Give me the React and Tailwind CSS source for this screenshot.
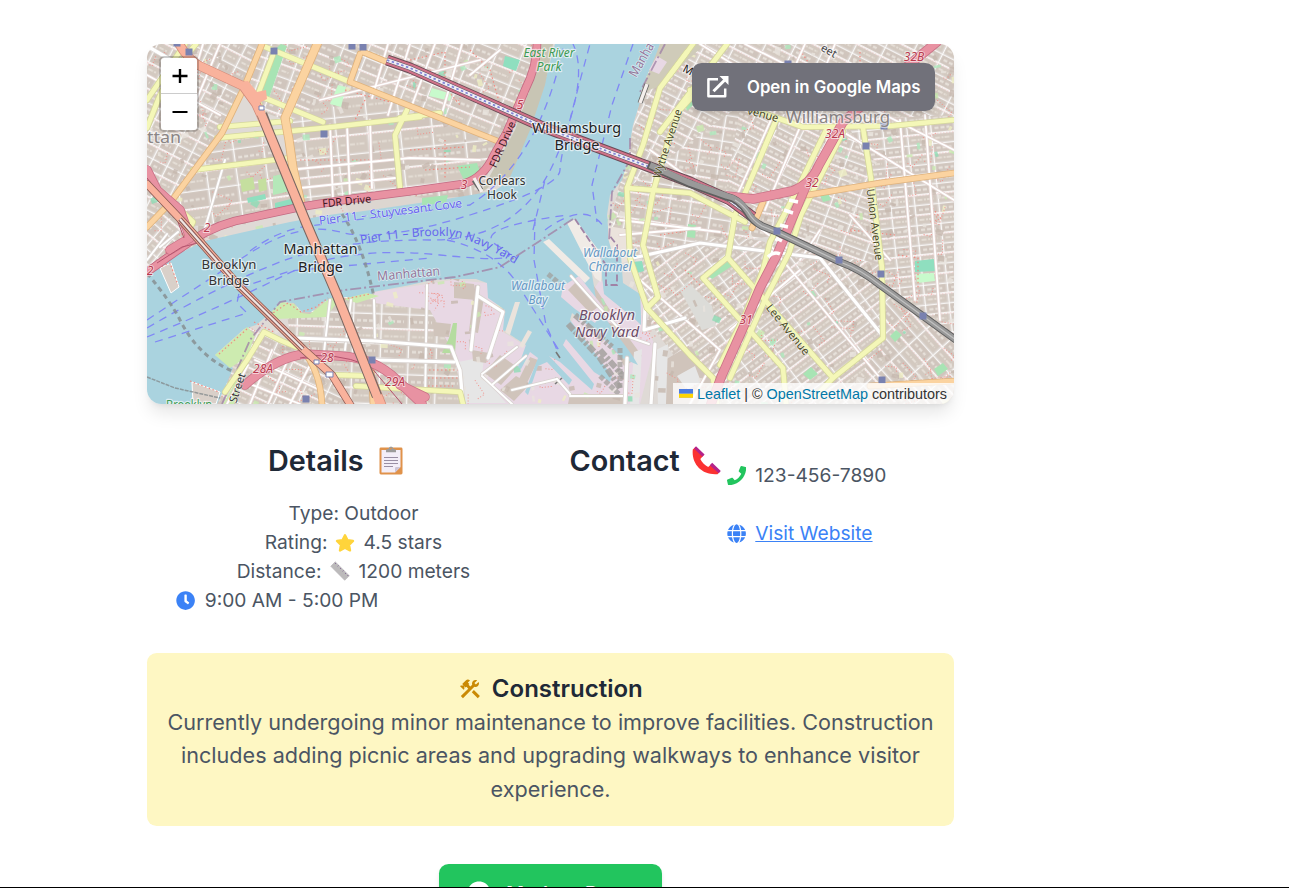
import React from "react";
import { FaClock, FaPhone, FaGlobe, FaCheckCircle } from "react-icons/fa";
import { MdConstruction } from "react-icons/md";

const WATER =
  "147,278 165,262 182,252 205,241 240,233 290,222 322,216 350,212 400,204 440,200 477,194 496,190 507,182 517,155 530,118 543,90 550,62 555,44 660,44 656,58 647,75 641,92 640,102 633,125 630,142 628,160 622,180 610,195 607,215 609,240 620,243 622,285 640,295 641,325 628,312 604,292 600,262 573,218 590,262 597,305 610,325 632,355 638,365 622,358 597,332 572,313 570,320 612,376 610,382 594,372 566,339 563,345 594,384 592,390 560,362 549,356 572,380 569,385 547,362 538,366 528,395 525,392 538,358 530,352 521,369 518,367 526,345 503,330 505,310 488,298 487,283 476,279 453,279 432,280 410,285 373,292 370,297 345,297 322,302 311,312 302,312 294,303 282,302 267,316 256,325 244,329 215,355 233,368 226,385 217,404 147,404";

const DISTRICTS = [
  { id: "west", pts: "147,44 262,44 243,90 222,133 172,202 147,226", a: 27, w: 16, h: 12 },
  { id: "chinatown", pts: "245,84 262,44 320,44 285,120 258,110", a: 20, w: 15, h: 12 },
  { id: "les", pts: "315,44 540,44 530,95 500,145 350,84 323,122 285,118", a: 22, w: 24, h: 14 },
  { id: "seward", pts: "290,122 350,84 500,140 480,196 302,205", a: -6, w: 32, h: 19 },
  { id: "bridges", pts: "222,134 262,136 302,206 190,228 168,200", a: -8, w: 30, h: 18 },
  { id: "civic", pts: "147,226 172,200 195,230 200,245 147,282", a: 40, w: 15, h: 12 },
  { id: "north", pts: "640,44 954,44 954,115 740,215 607,235 640,100", a: 27, w: 27, h: 10 },
  { id: "northside", pts: "625,190 740,105 800,185 780,235 605,260", a: 9, w: 21, h: 13 },
  { id: "mid", pts: "740,108 845,122 795,215 740,205 725,198", a: 27, w: 25, h: 10 },
  { id: "east", pts: "845,120 954,115 954,404 882,404 882,268", a: -6, w: 24, h: 10 },
  { id: "centre", pts: "780,212 845,120 875,175 882,275 777,240", a: 20, w: 25, h: 10 },
  { id: "south", pts: "640,255 730,235 883,265 883,340 954,404 710,404 640,310", a: -37, w: 34, h: 10 },
  { id: "broadway", pts: "883,290 954,340 954,404 840,404 883,342", a: 48, w: 24, h: 12 },
  { id: "dumbo", pts: "285,300 360,296 450,285 505,305 500,345 560,404 300,404", a: 2, w: 28, h: 15 },
  { id: "heights", pts: "217,404 250,328 330,370 345,404", a: 25, w: 22, h: 12 },
];

function seeded(seed) {
  let s = seed;
  return () => {
    s = (s * 16807) % 2147483647;
    return s / 2147483647;
  };
}

const rnd = seeded(4271);
const SPECKS = Array.from({ length: 760 }, () => {
  const x = 147 + rnd() * 807;
  const y = 44 + rnd() * 360;
  const k = rnd();
  return {
    x,
    y,
    w: 2 + rnd() * 6,
    h: 2 + rnd() * 5,
    r: rnd() * 60 - 30,
    c: k < 0.1 ? "#aee8bd" : k < 0.16 ? "#c9eab0" : k < 0.2 ? "#8fdcb5" : k < 0.26 ? "#eeeec4" : k < 0.6 ? "#e8e3dd" : "#c6b8ae",
  };
});
const DOTS = Array.from({ length: 300 }, () => ({
  x: 147 + rnd() * 807,
  y: 44 + rnd() * 360,
  l: 6 + rnd() * 15,
  r: rnd() * 180,
}));

const PARKS = [
  ["M338 85l8 2-5 20-11-3z", "#c8facc"],
  ["M505 56l15 4-4 11-13-5z", "#8fdfbf"],
  ["M432 88l20 6-2 7-21-5z", "#c8facc"],
  ["M273 51l8-7 6 2-18 52-9 4z", "#a8e4b4"],
  ["M240 180l13-3 2 12-13 3z M258 180l8-2 1 12-8 2z", "#c5df9f"],
  ["M273 176l14-3 4 18-18 4z", "#b5e8b9"],
  ["M457 166l20-3 3 9-16 8z M422 198l26-3-2 8-24 2z", "#a8e4b4"],
  ["M275 203l20-5 2 7-22 4z M247 198l18-4 1 5-18 4z", "#8fdfbf"],
  ["M215 355l32-28 8 8-8 22-17 11z", "#cdebb0"],
  ["M267 316l15-14 12 2 8 9 8 1 20-16 10 1-14 18-50 2z", "#cdebb0"],
  ["M343 299l24-6 12 3-22 7z", "#cdebb0"],
  ["M915 261l19-2 2 12-21 1z", "#8fdfbf"],
  ["M916 274l18-1 1 8-18 2z", "#c8facc"],
  ["M633 262l9-1 2 10-7 2z", "#8fdfbf"],
  ["M707 275l22-14 3 5-20 13z M890 336l6-6 6 5-7 7z M803 374l8-7 7 7-8 6z M934 369l9-6 5 6-10 7z M684 100l6-3 3 8-6 6z", "#a8e4b4"],
  ["M688 224l8 1-1 13-8-1z M820 195l8-2 3 7-8 2z", "#a8e4b4"],
  ["M449 338l4-15 4 0-2 30-13 0z", "#b5dca0"],
  ["M232 388l8-28 6 4-12 40h-11z", "#cdebb0"],
];

const YELLOW = [
  "M185 44L147 100", "M196 44Q166 80 158 100L147 128", "M273 55L257 97L262 112", "M263 46L350 82", "M260 96L323 122",
  "M220 127L290 121", "M217 138L323 128L420 117", "M193 170L290 158", "M407 110L395 135L400 188", "M172 202L193 222L186 236",
  "M400 118L440 113", "M687 52L660 88L643 145L627 188L628 215L630 258L647 308L690 355L713 378L717 404",
  "M700 88L680 110L670 135L653 192L647 225L643 245L658 297L647 308", "M627 188L690 193L707 202L745 222", "M727 44L660 132",
  "M693 44L670 75", "M690 90L740 105L777 118L803 127L890 126L953 120", "M777 118L743 198L735 215L728 257L703 278L783 368L786 404",
  "M728 258L833 378L883 338L882 268L872 185L863 128", "M827 128L797 190L770 242L763 270L745 315L720 365",
  "M843 132L801 215L789 253L765 300L730 378", "M225 392L247 360L264 332L282 341L308 352", "M335 375L372 376", "M356 386L460 392L463 404", "M833 378L815 397",
];
const ORANGE = [
  "M262 44L243 90L222 133L170 203L147 227", "M363 52L387 62", "M360 54L350 82L420 110L500 142", "M808 195L880 183L954 173",
  "M763 202L752 228", "M870 386L954 381", "M302 349Q320 370 322 404", "M371 365L373 404",
];
const WHITE = [
  "M633 258L700 243L820 258L882 335", "M478 287L471 350M478 296L503 312L488 358", "M295 338L375 341L451 347L460 370L463 404", "M375 360L454 362",
  "M645 308L644 330L685 318M627 358L625 404M655 344L651 404", "M147 46L185 68",
];
const LANES = [
  "M482 374L517 347M482 376L512 404M493 384L526 356M512 390L557 379", "M571 276L596 304L626 336L649 344M557 379L570 394M570 396H625",
  "M147 260L167 234M160 247L178 232M205 228L225 160", "M330 300L324 352M351 300L345 350M374 300L375 342M427 285L425 404",
];
const MINOR = [
  "M147 75L220 115M203 44L185 104M220 44L190 115M320 100L480 60", "M388 44L372 98M410 44L388 115M435 44L412 105M462 44L440 120M470 75L500 50",
  "M288 170L410 158L480 160M300 188L395 178M330 125L333 200M347 125L350 197M370 120L372 188", "M700 44L954 200M745 44L954 150M650 150L790 250M805 44L735 200M835 44L765 210",
  "M640 280L720 350L690 404M770 245L890 390M800 270L730 330M900 120L915 300M925 115L940 320", "M850 215L890 260M820 230L800 260M620 235L700 228M620 220L720 232",
  "M227 404L248 365M250 404L272 350M268 404L290 355M290 404L309 367M255 360L320 390M245 382L300 404",
];
const FERRIES = [
  "M147 320Q200 285 250 253T340 232T470 215T560 170T590 44", "M147 328Q220 285 280 262T430 240T555 160T573 44", "M147 337Q225 305 285 275T440 255T500 247T567 215",
  "M155 342L247 313L237 303L240 288L290 271L430 258", "M250 251Q280 229 310 226L470 205Q540 160 564 44", "M633 44L612 105L592 185L597 222", "M533 230L545 180", "M447 240Q492 250 515 280L560 352", "M535 218L534 260L546 325L558 352",
  "M545 230Q585 200 604 227",
];

const STATIONS = [[189, 52], [177, 43], [274, 51], [352, 46], [363, 47], [324, 134], [372, 360], [306, 399], [777, 231], [839, 260], [881, 274], [923, 316], [882, 380], [866, 146], [884, 126], [788, 64]];

function Road({ lines, color, casing, width }) {
  return (
    <g fill="none" strokeLinejoin="round" strokeLinecap="round">
      {lines.map((d) => <path key={"c" + d} d={d} stroke={casing} strokeWidth={width + 1.6} />)}
      {lines.map((d) => <path key={d} d={d} stroke={color} strokeWidth={width} />)}
    </g>
  );
}

function Label({ x, y, children, size = 12, fill = "#333", rotate = 0, italic, anchor = "middle", halo = 2.4, length }) {
  return (
    <text
      x={x}
      y={y}
      transform={`rotate(${rotate} ${x} ${y})`}
      fontSize={size}
      fill={fill}
      stroke="rgba(255,255,255,0.6)"
      strokeWidth={halo}
      strokeLinejoin="round"
      paintOrder="stroke"
      textAnchor={anchor}
      fontStyle={italic ? "italic" : "normal"}
      textLength={length}
      lengthAdjust="spacingAndGlyphs"
    >
      {children}
    </text>
  );
}

function CityMap() {
  const fdr = ["M147 272L178 250Q205 229 235 221L300 207L350 199L420 190L463 184Q484 178 494 155L507 132L525 90Q537 66 537 44"];
  const bqe = ["M937 42L910 64L843 122L819 165Q811 184 792 191L753 199L727 196", "M806 186L795 212L777 255L760 288L743 328L722 375L711 404", "M245 385Q275 358 304 354L340 356Q375 358 397 380L422 404", "M147 170L157 190L180 210L190 238L170 250", "M400 385L425 397"];
  const trunk = ["M178 42Q188 60 200 66L243 86L256 104L270 135L307 225L337 295L382 406", "M147 184L183 222L240 287L303 349L332 375L351 406"];
  const wb = "M387 60L410 68L487 102L543 127L623 157L690 182L730 200L753 217";
  return (
    <svg viewBox="147 44 807 360" preserveAspectRatio="none" className="block h-full w-full" fontFamily='"Noto Sans", sans-serif'>
      <defs>
        {DISTRICTS.map((d) => (
          <pattern key={d.id} id={d.id} width={d.w} height={d.h * 2} patternUnits="userSpaceOnUse" patternTransform={`rotate(${d.a})`}>
            <rect width={d.w} height={d.h * 2} fill="#dfd9d5" />
            <rect x="1.4" y="1.2" width={d.w - 2.8} height={d.h - 2.4} fill="#d0c5bd" />
            <rect x="1.4" y={d.h + 1.2} width={d.w - 2.8} height={d.h - 2.4} fill="#d3c9c0" />
            <path d={`M4 ${d.h / 2}H${d.w - 5}`} stroke="#e6e0d9" strokeWidth="2.4" strokeDasharray="4 2" />
            <path d={`M3.5 ${d.h * 1.5}H${d.w - 4}`} stroke="#e4ddd5" strokeWidth="2" strokeDasharray="5 1.5 2 1" />
            <path d={`M0 0H${d.w}M0 ${d.h}H${d.w}M0 0V${d.h * 2}`} stroke="#fff" strokeWidth="1.7" />
            <path d={`M0 ${d.h + 0.8}H${d.w}`} stroke="#efb6b6" strokeWidth="0.6" strokeDasharray="1.5 1.5" />
          </pattern>
        ))}
      </defs>
      <g className="blur-[0.35px]">
        <rect x="147" y="44" width="807" height="360" fill="#dfdad6" />
        {DISTRICTS.map((d) => <polygon key={d.id} points={d.pts} fill={`url(#${d.id})`} />)}
        <polygon points="374,292 453,280 487,283 505,310 503,332 540,355 550,404 465,404 452,350 430,310 374,303" fill="#e8d8e4" />
        <polygon points="530,404 538,360 560,338 600,280 645,300 645,325 655,345 640,404" fill="#e8d8e4" />
        <path d="M458 362l26-5-2 18 24 28h-42z" fill="#e6e6e6" />
        <g fill="#d0c4bb">
          <path d="M454 282l20 2 2 16-22-2zM474 290l10 8-6 35-9-2zM433 322l18 2-2 13-15-1zM472 350l17 3-3 10-13-2zM500 355l17 12-16 18-17-12zM516 376l14 8-16 17-14-11z" />
          <path d="M530 357l8 3-12 25-8-4zM570 394l56 0 0 10-58 0zM575 288l15-8 20 30-5 6zM600 320l20 6 22 30-18 10zM690 345l22 35-15 24h-38l6-44z" />
        </g>
        <path d="M634 352l8-3-3 55h-9zM656 350l12-6-2 60h-8zM677 376l18-10 6 16-14 8z" fill="#e6e6e6" />
        <path d="M680 290l8-8 24 24 4 20-14 4z" fill="#dcdcd8" />
        {SPECKS.map((s, i) => <rect key={i} x={s.x} y={s.y} width={s.w} height={s.h} fill={s.c} opacity="0.8" transform={`rotate(${s.r} ${s.x} ${s.y})`} />)}
        {DOTS.map((s, i) => <path key={i} d={`M${s.x} ${s.y}h${s.l}v${s.l / 2}`} fill="none" stroke="#f0918a" strokeWidth="1" strokeDasharray="1 2" transform={`rotate(${s.r} ${s.x} ${s.y})`} />)}
        <polygon points={WATER} fill="#aad3df" />
        <path d="M350 213L440 200 400 195 345 205z" fill="#dcd6d0" />
        <path d="M480 194L500 178 508 182 530 130 545 85 553 44 541 44 535 75 515 130z" fill="#c8c5b4" />
        <path d="M641 93L660 44h45l-45 42z" fill="#cfcbb9" />
        <path d="M649 70l8-14 10 6-8 12z" fill="#e8d8e4" />
        <path d="M160 268l11-5 8 24-8 6zM192 382l28 10-4 12h-23z" fill="#d9d0c9" stroke="#fff" strokeWidth="1" />
        <g fill="#f0ebe6">
          <path d="M543 242l6-3 41 39-5 5zM567 223l8-4 28 37-2 26-6-4z" />
          <path d="M515 302l5 0-10 33-5-3zM528 330l4 2-9 16-4-2zM608 226l22 4 0 30-14 6-8-28z" fill="#ebe3dc" />
        </g>
        <path d="M563 286l16-10 25 32-9 15-20-14-14-12z" fill="#e8d8e4" />
        <path d="M568 290l8-8 22 25-8 6z" fill="#cfc3ba" />
        <g fill="none" stroke="#a09d9a" strokeWidth="6" strokeDasharray="8 2 3 2" opacity="0.8">
          <path d="M568 324L600 358 620 388M575 315L612 347M600 350L625 378" />
        </g>
        <path d="M620 348V390M600 376L619 394M548 274l12 10" fill="none" stroke="#a09c99" strokeWidth="5" strokeDasharray="5 2" opacity="0.7" />
        <path d="M601 255l20 0 2 28 17 11 1 30-37-30z" fill="#aad3df" />
        <path d="M555 378l7 6M562 378l-7 6M556 352l4 6" stroke="#777" strokeWidth="1.6" fill="none" />
        {PARKS.map(([d, c]) => <path key={d} d={d} fill={c} />)}
        <g fill="none" stroke="#f08a80" strokeWidth="1.2" strokeDasharray="1.5 2.5">
          <path d="M219 354l28-25M270 315l18-12 13 9 15-5 12-9M340 300l30-6M254 322l20 10M158 268l12-5 8 22M190 381l29 11" />
          <path d="M410 60l35-8v30M470 50l20 20 10 35M430 70l30 35M300 160h70v30M410 150l55-3M425 170l45-3M445 140v40M850 230l45 5M898 255l20 3v30M930 205l12 15" />
          <path d="M860 52v25M800 50l12 18M770 190l12 10M685 270l15 15M660 235l25-4M345 90l45 12M365 100l-10 20M425 370h35M428 378h32M428 386h25" />
        </g>
        <g fill="none" stroke="#8088f5" strokeWidth="1.3" strokeDasharray="8 6">
          {FERRIES.map((d) => <path key={d} d={d} />)}
        </g>
        <g fill="none" stroke="#a083a6" strokeWidth="1.8">
          <path d="M665 44L640 92M630 138V160L612 192L609 240M573 219L500 267L455 277L345 290L280 302L250 340L222 404" strokeDasharray="11 3 2 3" opacity="0.8" />
          <path d="M575 219L606 265V285H617V245L609 235" strokeDasharray="7 3" />
        </g>
        <g fill="none" stroke="#858c8e" strokeWidth="3" strokeDasharray="5 4" opacity="0.8">
          <path d="M147 273Q171 302 180 320Q198 356 232 371M342 214Q363 245 374 297" />
          <path d="M147 377L175 388L220 398" strokeWidth="1.5" strokeDasharray="4 1" />
        </g>
        <Road lines={MINOR} color="#fff" casing="#e5d5d2" width={1.8} />
        <Road lines={LANES} color="#fff" casing="#d9d3d0" width={2} />
        <Road lines={WHITE} color="#fff" casing="#d9d3d0" width={3.2} />
        <Road lines={YELLOW} color="#f4f7b8" casing="#d5d79c" width={4.6} />
        <Road lines={ORANGE} color="#fbd3a0" casing="#dfb27c" width={5} />
        <Road lines={["M318 42L285 118L289 140L293 168L301 204"]} color="#fbd3a0" casing="#dfb27c" width={7.5} />
        <Road lines={fdr} color="#e892a2" casing="#c26a82" width={7} />
        <Road lines={bqe} color="#e892a2" casing="#ca7287" width={8} />
        <path d="M147 178L175 214L184 238 M300 358Q330 350 370 366L402 404 M157 263l25-16 20-5" stroke="#b4536d" strokeWidth="1" fill="none" />
        <path d="M789 200l9 2M784 210l9 3M780 225l8 2M776 238l6 3M768 257q6-6 12-3" stroke="#fff" strokeWidth="3.5" fill="none" />
        <Road lines={trunk.slice(0, 1)} color="#f9b29c" casing="#d28b7a" width={8} />
        <Road lines={trunk.slice(1)} color="#f9b29c" casing="#8c5b54" width={6.5} />
        <path d="M240 82l17 22 10-5-1-9-9 2-9-11z" fill="#f9b29c" />
        <path d="M180 219L240 287L303 349" fill="none" stroke="#8d5c5a" strokeWidth="4.4" />
        <path d="M180 219L240 287L303 349" fill="none" stroke="#eee6e3" strokeWidth="2.2" />
        <path d="M262 114L270 135L307 225L337 295L377 396" fill="none" stroke="#7a6863" strokeWidth="10.5" />
        <path d="M258 106L270 135L307 225L337 295L380 404" fill="none" stroke="#f9b29c" strokeWidth="8.4" />
        <g fill="none" strokeLinejoin="round">
          <path d={wb} stroke="#6b4a55" strokeWidth="11" />
          <path d={wb} stroke="#cf7288" strokeWidth="9.2" />
          <path d={wb} stroke="#5d5962" strokeWidth="5" />
          <path d={wb} stroke="#f3eef5" strokeWidth="3.6" />
          <path d={wb} stroke="#8188d8" strokeWidth="1.8" strokeDasharray="2.5 2.5" />
          <path d="M648 165L690 184L727 197Q738 198 747 212Q752 221 762 226L777 232L840 262Q860 269 880 285L956 340" stroke="#5e5e5e" strokeWidth="7.6" />
          <path d="M650 165L690 183L727 196Q739 198 748 212Q753 221 762 226L777 232L840 262Q860 269 880 285L956 340" stroke="#999" strokeWidth="5.8" />
          <path d="M735 200Q742 204 748 212Q753 221 762 226L777 232L840 262Q860 269 880 285L956 340" stroke="#c2c2c2" strokeWidth="1.2" />
          <path d="M647 84L640 103M474 180l7 10" stroke="#666" strokeWidth="5" />
          <path d="M647 84L640 103M474 178l8 14" stroke="#f5efed" strokeWidth="3.4" />
        </g>
        <g fill="#7981b0">
          {STATIONS.map(([x, y]) => <rect key={x + "-" + y} x={x - 3.5} y={y - 3.5} width="7" height="7" />)}
        </g>
        <path d="M259 106h5v4h-5z M314 360h5v4h-5zM326 372h7v5h-7z" fill="#fff" stroke="#7981b0" />
      </g>

      <Label x={576.5} y={133} size={14.4} fill="#222" length={89}>Williamsburg</Label>
      <Label x={577} y={150} size={14.4} fill="#222" length={45}>Bridge</Label>
      <Label x={320.5} y={254} size={14.4} fill="#222" length={74}>Manhattan</Label>
      <Label x={320.5} y={271.5} size={14.4} fill="#222" length={45}>Bridge</Label>
      <Label x={229} y={269} size={13.2} length={55}>Brooklyn</Label>
      <Label x={229} y={285} size={13.2} length={41}>Bridge</Label>
      <Label x={502} y={185} size={12} length={47}>Corlears</Label>
      <Label x={502} y={199} size={12} length={30}>Hook</Label>
      <Label x={549} y={57} size={12} fill="#3d9b53" italic length={51}>East River</Label>
      <Label x={549} y={71} size={12} fill="#3d9b53" italic length={25}>Park</Label>
      <Label x={838} y={122.5} size={16.5} fill="#8a8585" length={104}>Williamsburg</Label>
      <Label x={147} y={142.500} size={16.5} fill="#8a8585" anchor="start" length={34}>ttan</Label>
      <Label x={607} y={320} size={14.4} fill="#6c4c68" italic length={56}>Brooklyn</Label>
      <Label x={607} y={337} size={14.4} fill="#6c4c68" italic length={64}>Navy Yard</Label>
      <Label x={610} y={257} size={12} fill="#6699c4" italic length={54}>Wallabout</Label>
      <Label x={610} y={271} size={12} fill="#6699c4" italic length={43}>Channel</Label>
      <Label x={538} y={290} size={12} fill="#6699c4" italic length={54}>Wallabout</Label>
      <Label x={538} y={304} size={12} fill="#6699c4" italic length={19}>Bay</Label>
      <Label x={391} y={216} size={12} fill="#6666ee" rotate={-7} length={144} halo={1}>Pier 11 – Stuyvesant Cove</Label>
      <path id="navy" d="M361 244Q410 235 450 236Q477 240 518 266" fill="none" />
      <text fontSize="12" fill="#6666ee"><textPath href="#navy" textLength="161" lengthAdjust="spacingAndGlyphs">Pier 11 – Brooklyn Navy Yard</textPath></text>
      <Label x={409} y={278} size={13} fill="#93779b" rotate={-5} length={63} halo={1.5}>Manhattan</Label>
      <Label x={636} y={78} size={13} fill="#93779b" rotate={-60} anchor="start" halo={1.5} length={37}>Manha</Label>
      <Label x={347} y={205} size={11} fill="#3f1724" rotate={-6} halo={0} length={49}>FDR Drive</Label>
      <Label x={506} y={146} size={11} fill="#3f1724" rotate={-66} halo={0} length={49}>FDR Drive</Label>
      <Label x={671} y={145} size={11} fill="#4a4a22" rotate={-72} length={72} halo={1}>Wythe Avenue</Label>
      <Label x={871} y={225} size={11} fill="#4a4a22" rotate={83} length={72} halo={1}>Union Avenue</Label>
      <Label x={785} y={332} size={11} fill="#4a4a22" rotate={51} length={62} halo={1}>Lee Avenue</Label>
      <Label x={682} y={71} size={11} fill="#222" rotate={28} anchor="start">M</Label>
      <Label x={762} y={118} size={11} fill="#4a4a22" rotate={15} halo={1}>venue</Label>
      <Label x={827} y={54} size={11} fill="#444" rotate={30}>eet</Label>
      <Label x={241} y={389} size={11} fill="#333" rotate={-72} halo={1}>Street</Label>
      <Label x={189} y={409} size={12} fill="#3d9b53" length={46}>Brooklyn</Label>
      {[["5", 520, 109], ["3", 464, 189], ["2", 207, 232], ["2", 150, 275], ["32B", 914, 61], ["32A", 835, 138], ["32", 812, 187], ["31", 746, 324], ["28", 327, 362], ["28A", 263, 373], ["29A", 395, 386]].map(([t, x, y]) => (
        <Label key={t + x} x={x} y={y} size={12} fill="#b93a4e" italic halo={1.8}>{t}</Label>
      ))}
    </svg>
  );
}

function OpenIcon() {
  return (
    <svg viewBox="0 0 22 22" className="ml-1 size-[22px]" fill="none" stroke="currentColor">
      <path d="M11 3.300H1.400V20.300H18.200V12.500" strokeWidth="2.500" strokeLinejoin="round" />
      <path d="M6.500 15.200L17.500 4.200" strokeWidth="3" />
      <path d="M12.500 0H21.500V9z" fill="currentColor" stroke="none" />
    </svg>
  );
}

function MapCard() {
  return (
    <div className="relative h-[360px] overflow-hidden rounded-[14.4px] shadow-[0_12px_18px_-3.6px_rgba(0,0,0,0.1),0_4.8px_7.2px_-4.8px_rgba(0,0,0,0.1)]">
      <CityMap />
      <div className="absolute left-3 top-3 flex w-[40px] flex-col overflow-hidden rounded-[5px] border-2 border-black/20 bg-clip-padding font-['Liberation_Sans',sans-serif]">
        <button className="flex h-[36px] items-center justify-center border-b border-[#ccc] bg-white pl-[2px]" aria-label="Zoom in">
          <svg viewBox="0 0 16 16" className="size-4" stroke="#000" strokeWidth="2.4"><path d="M.5 8H15.500M8 1V15" /></svg>
        </button>
        <button className="flex h-[36px] items-center justify-center bg-white pl-[2px]" aria-label="Zoom out">
          <svg viewBox="0 0 16 16" className="size-4" stroke="#000" strokeWidth="2.2"><path d="M.5 8H15.500" /></svg>
        </button>
      </div>
      <button className="absolute right-[19px] top-[19px] flex h-12 w-[243px] items-center rounded-[9.6px] bg-[#71717a] pl-[11px] text-white shadow-md">
        <OpenIcon />
        <span className="ml-[18px] whitespace-nowrap text-[16.8px] font-semibold leading-6">Open in Google Maps</span>
      </button>
      <div className="absolute bottom-0 right-0 flex h-[21px] items-center whitespace-pre bg-white/80 pl-[6px] pr-[7px] font-['Liberation_Sans',sans-serif] text-[14.4px] leading-[20px] tracking-[-0.01px] text-[#333]">
        <svg viewBox="0 0 12 8" className="mr-1 h-[9.6px] w-[14.4px]"><path fill="#4C7BE1" d="M0 0h12v4H0z" /><path fill="#FFD500" d="M0 4h12v3H0z" /><path fill="#E0BC00" d="M0 7h12v1H0z" /></svg>
        <span className="text-[#0078A8]">Leaflet</span> | © <span className="text-[#0078A8]">OpenStreetMap</span> contributors
      </div>
    </div>
  );
}

function Clipboard() {
  return (
    <svg viewBox="0 0 24 29" className="h-[29px] w-6">
      <rect x="0.5" y="1.500" width="23" height="27" rx="1.4" fill="#e0924a" />
      <path d="M2.5 4h19v17l-5.5 5.5H2.5z" fill="#f3eef8" />
      <path d="M21.500 21l-5.500 5.500v-4.300q0-1.200 1.200-1.200z" fill="#cdc4d6" />
      <path d="M5 11.500h14M5 14.500h14M5 17.500h14M5 20.500h9" stroke="#998ea4" strokeWidth="1" />
      <path d="M7 6.200V4.500Q7 3 9 3h.500Q10 .5 12 .5T14.500 3H15q2 0 2 1.500v1.700z" fill="#9b9b9b" />
      <circle cx="12" cy="2.600" r="0.900" fill="#e0924a" />
    </svg>
  );
}

function Receiver() {
  return (
    <svg viewBox="0 0 29 29" className="size-[29px]">
      <path d="M.8 3.500C-.8 18 10 29.500 25.500 28.200L28 25.500 19.500 18 16.200 21C13 19.500 10 16.500 8.300 13L11.500 9.500 3.500 1z" fill="#fb3232" />
      <path d="M2 2.400L4 .3 12.600 8.500 10.400 10.800zM17.800 19.200L20.200 16.700 28.800 25 26.700 27.300z" fill="#b4238a" />
    </svg>
  );
}

function Star() {
  return (
    <svg viewBox="0 0 20 20" className="mx-[8px] size-[20px]">
      <path d="M10 2.200l2.500 5 5.500.8-4 3.900 1 5.500-5-2.600-5 2.600 1-5.500-4-3.900 5.500-.8z" fill="#ffd43b" stroke="#ffd43b" strokeWidth="2.400" strokeLinejoin="round" />
    </svg>
  );
}

function Ruler() {
  return (
    <svg viewBox="0 0 20 20" className="mx-[8.500px] size-[20px]">
      <path d="M5.200.8L19.300 14.800 14.700 19.300.8 5.300z" fill="#bcbabb" stroke="#b3b0b3" strokeWidth=".6" />
      <path d="M6 2l-.8.8M8.500 4.500l-.8.8M11 7l-.8.8M13.500 9.500l-.8.800M16 12l-.8.8M18.200 14.200l-.8.8" stroke="#7f6394" strokeWidth="1" />
    </svg>
  );
}

export default function App() {
  return (
    <div className="relative h-[888px] overflow-hidden bg-white font-['Inter',sans-serif] text-[19.2px] leading-[28.8px] text-[#4b5563]">
      <main className="ml-[147px] w-[807px] pt-[44px]">
        <MapCard />
        <section className="grid grid-cols-2 pt-[38px]">
          <div>
            <h2 className="flex h-[38.4px] items-center pl-[121px] text-[28.8px] font-semibold leading-[38.4px] text-[#1f2937]">
              Details <span className="-mt-[2px] ml-[15px]"><Clipboard /></span>
            </h2>
            <div className="mt-[19px] w-[413px]">
              <p className="flex justify-center">Type: Outdoor</p>
              <p className="flex items-center justify-center">Rating:<Star />4.5 stars</p>
              <p className="flex items-center justify-center">Distance:<Ruler />1200 meters</p>
              <p className="flex items-center pl-[29px]"><FaClock className="mr-[9.6px] size-[19.2px] text-[#3b82f6]" />9:00 AM - 5:00 PM</p>
            </div>
          </div>
          <div className="flex pl-[19px]">
            <h2 className="flex h-[38.4px] w-[157px] shrink-0 items-center text-[28.8px] font-semibold leading-[38.4px] text-[#1f2937]">
              Contact <span className="-mt-px ml-3 shrink-0"><Receiver /></span>
            </h2>
            <div className="pt-[19px]">
              <p className="flex items-center"><FaPhone className="mr-[9.6px] size-[19.2px] text-[#22c55e]" />123-456-7890</p>
              <p className="mt-[29px] flex items-center"><FaGlobe className="mr-[9.6px] size-[19.2px] text-[#3b82f6]" /><a className="text-[#3b82f6] underline">Visit Website</a></p>
            </div>
          </div>
        </section>
        <section className="mt-[38.4px] h-[173px] rounded-[9.6px] bg-[#fef7c3] p-[19.2px] text-center">
          <h3 className="flex items-center justify-center text-2xl font-semibold leading-[33.6px] text-[#1f2937]">
            <MdConstruction className="mr-[9.6px] size-6 text-[#ca8a04]" />Construction
          </h3>
          <p className="text-[21.6px] leading-[33.6px]">
            Currently undergoing minor maintenance to improve facilities. Construction<br />includes adding picnic areas and upgrading walkways to enhance visitor<br />experience.
          </p>
        </section>
        <div className="mt-[38px] flex justify-center">
          <button className="flex h-[58px] w-[223px] items-center justify-center rounded-[9.6px] bg-[#22c55e] font-semibold text-white shadow-md">
            <FaCheckCircle className="mr-[15px] size-6" />Mark as Done
          </button>
        </div>
      </main>
      <div className="absolute bottom-0 left-0 h-px w-full bg-black" />
    </div>
  );
}
